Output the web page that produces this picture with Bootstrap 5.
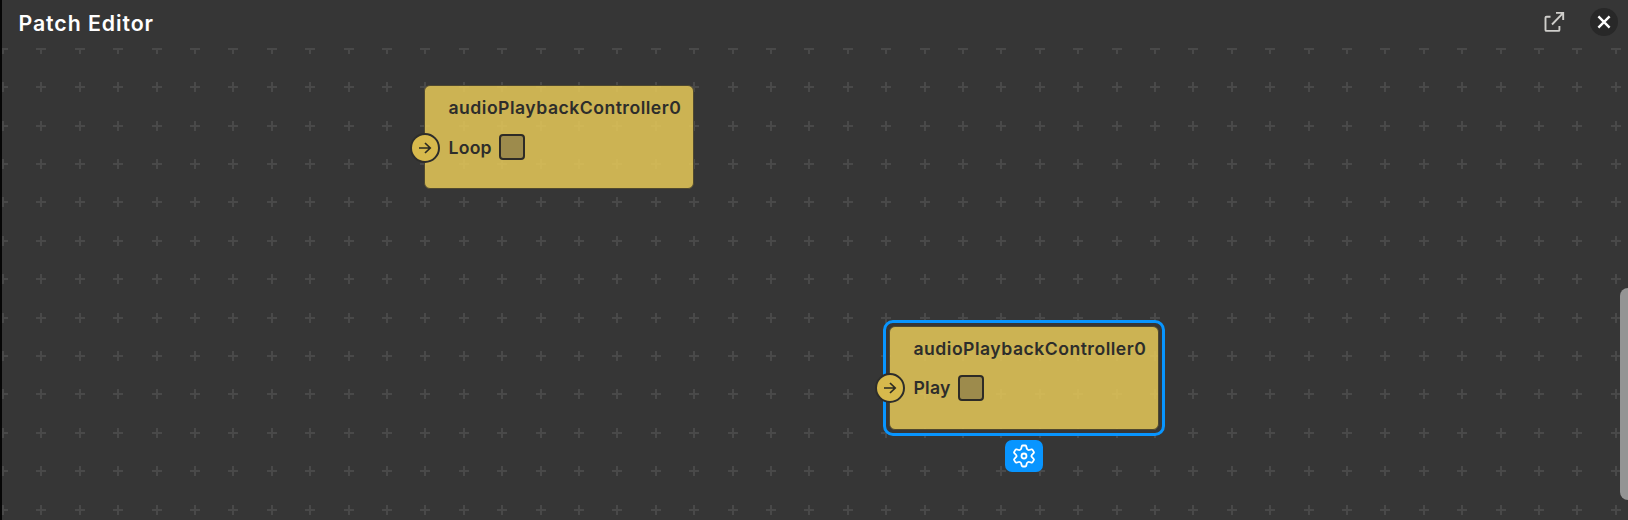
<!DOCTYPE html>
<html lang="en">
<head>
<meta charset="utf-8">
<title>Patch Editor</title>
<link href="https://cdn.jsdelivr.net/npm/bootstrap@5.3.0/dist/css/bootstrap.min.css" rel="stylesheet">
<style>
body{background:#363636;font-family:Inter,"Liberation Sans",sans-serif}
.editor{height:520px;border-left:2px solid #060606;background:#363636}
.editor-head{height:48px;padding:0 10px 0 16.5px}
.editor-title{font-size:21.3px;font-weight:630;letter-spacing:.92px;line-height:25px;margin:-1px 0 0;color:#fff}
.head-btn{width:28px;height:28px;margin-top:-4px}
.head-close{background:#282828}
.grid-lines{stroke:#494949;stroke-width:2;shape-rendering:crispEdges;fill:none}
.node{width:270px;height:104px;padding:8.5px 0 0 23.5px;border:1px solid #50492f;border-radius:6px;background:rgba(225,197,88,.88);color:#2d2d2b;font-size:17.6px;font-weight:630}
.node-title{line-height:26px;letter-spacing:.49px;white-space:nowrap}
.node-row{height:26px;margin-top:13px;gap:7.5px;letter-spacing:.25px}
.node-label{padding-top:2px}
.port{left:-15px;top:46.5px;width:30px;height:30px;border:2px solid #2d2d2b;border-radius:50%;background:#d7b94c}
.node-check{width:26px;height:26px;border:2px solid #2d2b26;border-radius:4px;background:#9d8b4c}
.node-ring{inset:-7px;border:3px solid #0895ff;border-radius:10px;box-shadow:inset 0 0 0 3px #363636}
.node-gear{left:114.5px;top:113px;width:38px;height:32px;border-radius:7px;background:#0895ff}
.thumb{right:0;top:240px;width:8px;height:211.5px;border-radius:8px 0 0 8px;background:#949494}
</style>
</head>
<body class="overflow-hidden">
<main class="editor d-flex flex-column">
  <header class="editor-head d-flex align-items-center justify-content-between">
    <h1 class="editor-title">Patch Editor</h1>
    <div class="d-flex" style="gap:22px">
      <button class="btn p-0 border-0 head-btn d-flex align-items-center justify-content-center" aria-label="Open in window">
        <svg width="28" height="28" viewBox="0 0 28 28" fill="none" stroke="#cfcecb" stroke-width="1.9" stroke-linejoin="round"><path d="M10.5 8.7H6.5Q5.5 8.7 5.5 9.7V21.9Q5.5 22.9 6.5 22.9H18.4Q19.4 22.9 19.4 21.9V18"/><path stroke-linejoin="miter" d="M12 16.5L23 5.2M16 4.9H23.2V12"/></svg>
      </button>
      <button class="btn p-0 border-0 rounded-circle head-btn head-close d-flex align-items-center justify-content-center" aria-label="Close">
        <svg width="28" height="28" viewBox="0 0 28 28" stroke="#fff" stroke-width="2.4"><path d="M8.4 8.4L19.6 19.6M19.6 8.4L8.4 19.6"/></svg>
      </button>
    </div>
  </header>
  <section class="flex-grow-1 position-relative overflow-hidden">
    <svg class="d-block position-absolute top-0 start-0 w-100 h-100"><path id="grid" class="grid-lines"/></svg>

    <article class="node position-absolute" style="left:422px;top:37.4px">
      <div class="node-title">audioPlaybackController0</div>
      <div class="node-row d-flex align-items-center"><span class="node-label">Loop</span><span class="node-check"></span></div>
      <span class="port position-absolute d-flex align-items-center justify-content-center"><svg width="14" height="14" viewBox="0 0 14 14" fill="none" stroke="#2d2b22" stroke-width="1.7"><path d="M1 7H12.2M7 2L12.2 7L7 12"/></svg></span>
    </article>

    <article class="node position-absolute" style="left:887px;top:278px">
      <span class="node-ring position-absolute"></span>
      <div class="node-title">audioPlaybackController0</div>
      <div class="node-row d-flex align-items-center"><span class="node-label">Play</span><span class="node-check"></span></div>
      <span class="port position-absolute d-flex align-items-center justify-content-center" style="top:46px"><svg width="14" height="14" viewBox="0 0 14 14" fill="none" stroke="#2d2b22" stroke-width="1.7"><path d="M1 7H12.2M7 2L12.2 7L7 12"/></svg></span>
      <span class="node-gear position-absolute d-flex align-items-center justify-content-center">
        <svg width="24" height="24" viewBox="0 0 24 24" fill="none" stroke="#fff" stroke-width="1.8" stroke-linejoin="round"><path d="M10.8 1.5H13.2Q14 1.5 14.2 2.3L14.8 4.6Q15 5.4 15.8 5.8Q16.6 6.2 17.3 6L19.5 5.4Q20.2 5.2 20.6 5.9L21.8 7.9Q22.2 8.6 21.6 9.2L20 10.8Q19.4 11.4 19.4 12T20 13.2L21.6 14.8Q22.2 15.4 21.8 16.1L20.6 18.1Q20.2 18.8 19.5 18.6L17.3 18Q16.6 17.8 15.8 18.2Q15 18.6 14.8 19.4L14.2 21.7Q14 22.5 13.2 22.5H10.8Q10 22.5 9.8 21.7L9.2 19.4Q9 18.6 8.2 18.2Q7.4 17.8 6.7 18L4.5 18.6Q3.8 18.8 3.4 18.1L2.2 16.1Q1.8 15.4 2.4 14.8L4 13.2Q4.6 12.6 4.6 12T4 10.8L2.4 9.2Q1.8 8.6 2.2 7.9L3.4 5.9Q3.8 5.2 4.5 5.4L6.7 6Q7.4 6.2 8.2 5.8Q9 5.4 9.2 4.6L9.8 2.3Q10 1.5 10.8 1.5Z"/><circle cx="12" cy="12" r="2.5"/></svg>
      </span>
    </article>
    <span class="thumb position-absolute"></span>
  </section>
</main>
<script src="https://cdn.jsdelivr.net/npm/bootstrap@5.3.0/dist/js/bootstrap.bundle.min.js"></script>
<script>
// Plus marks every 38.4 units
let d = '';
for (let r = 0; r < 13; r++) {
  for (let c = 0; c < 43; c++) {
    const x = Math.ceil(0.5 + c * 38.4), y = Math.round(0.8 + r * 38.4);
    d += `M${x - 5} ${y}h10M${x} ${y - 5}v10`;
  }
}
document.getElementById('grid').setAttribute('d', d);
</script>
</body>
</html>
